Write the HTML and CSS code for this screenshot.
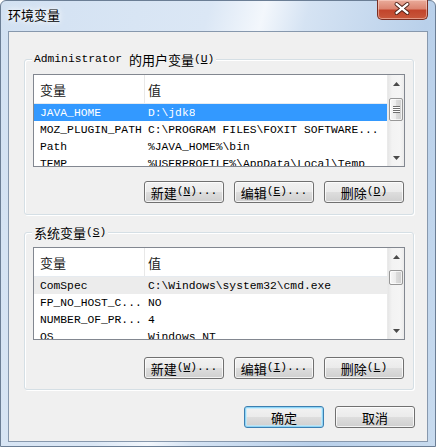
FILE: index.html
```html
<!DOCTYPE html>
<html lang="zh-CN">
<head>
<meta charset="utf-8">
<title>环境变量</title>
<link rel="stylesheet" href="styles.css">
</head>
<body>
<div class="window">
  <div class="titlebar">
    <span class="title">环境变量</span>
    <div class="close">
      <svg width="51" height="20" viewBox="0 0 51 20">
        <path d="M20 5 L31 14 M31 5 L20 14" stroke="#4a1f16" stroke-width="4.2" stroke-linecap="round"/>
        <path d="M20 5 L31 14 M31 5 L20 14" stroke="#ffffff" stroke-width="2.4" stroke-linecap="round"/>
      </svg>
    </div>
  </div>
  <div class="client">
    <div class="group">
      <div class="group-label"><span class="m">Administrator </span><span class="c">的用户变量</span><span class="m">(<u>U</u>)</span></div>
      <div class="list">
        <div class="list-body">
          <div class="lhead"><div class="col1 c">变量</div><div class="col2 c">值</div></div>
          <div class="row sel"><div class="col1">JAVA_HOME</div><div class="col2">D:\jdk8</div></div>
          <div class="row"><div class="col1">MOZ_PLUGIN_PATH</div><div class="col2">C:\PROGRAM FILES\FOXIT SOFTWARE...</div></div>
          <div class="row"><div class="col1">Path</div><div class="col2">%JAVA_HOME%\bin</div></div>
          <div class="row"><div class="col1">TEMP</div><div class="col2">%USERPROFILE%\AppData\Local\Temp</div></div>
        </div>
        <div class="vscroll">
          <div class="arrow"><svg width="7" height="4" viewBox="0 0 7 4"><path d="M0 4 L3.5 0 L7 4 Z" fill="#4a4a4a"/></svg></div>
          <div class="track"><div class="thumb thumb-a"><span class="grip"></span></div></div>
          <div class="arrow"><svg width="7" height="4" viewBox="0 0 7 4"><path d="M0 0 L3.5 4 L7 0 Z" fill="#4a4a4a"/></svg></div>
        </div>
      </div>
      <div class="btnrow">
        <button class="btn"><span class="c">新建</span><span class="m">(<u>N</u>)...</span></button>
        <button class="btn"><span class="c">编辑</span><span class="m">(<u>E</u>)...</span></button>
        <button class="btn"><span class="c">删除</span><span class="m">(<u>D</u>)</span></button>
      </div>
    </div>

    <div class="group group2">
      <div class="group-label"><span class="c">系统变量</span><span class="m">(<u>S</u>)</span></div>
      <div class="list">
        <div class="list-body">
          <div class="lhead"><div class="col1 c">变量</div><div class="col2 c">值</div></div>
          <div class="row hot"><div class="col1">ComSpec</div><div class="col2">C:\Windows\system32\cmd.exe</div></div>
          <div class="row"><div class="col1">FP_NO_HOST_C...</div><div class="col2">NO</div></div>
          <div class="row"><div class="col1">NUMBER_OF_PR...</div><div class="col2">4</div></div>
          <div class="row"><div class="col1">OS</div><div class="col2">Windows_NT</div></div>
        </div>
        <div class="vscroll">
          <div class="arrow"><svg width="7" height="4" viewBox="0 0 7 4"><path d="M0 4 L3.5 0 L7 4 Z" fill="#4a4a4a"/></svg></div>
          <div class="track"><div class="thumb thumb-b"></div></div>
          <div class="arrow"><svg width="7" height="4" viewBox="0 0 7 4"><path d="M0 0 L3.5 4 L7 0 Z" fill="#4a4a4a"/></svg></div>
        </div>
      </div>
      <div class="btnrow btnrow2">
        <button class="btn"><span class="c">新建</span><span class="m">(<u>W</u>)...</span></button>
        <button class="btn"><span class="c">编辑</span><span class="m">(<u>I</u>)...</span></button>
        <button class="btn"><span class="c">删除</span><span class="m">(<u>L</u>)</span></button>
      </div>
    </div>

    <div class="footer">
      <button class="btn btn-default"><span class="c">确定</span></button>
      <button class="btn"><span class="c">取消</span></button>
    </div>
  </div>
</div>
</body>
</html>
```

FILE: styles.css
```css
* { box-sizing: border-box; }
html, body { margin: 0; padding: 0; background: #ffffff; }
body {
  font-family: "Liberation Mono", "Noto Sans CJK SC", monospace;
  font-size: 11.3px;
  color: #000;
}
.c { font-family: "Noto Sans CJK SC", sans-serif; font-size: 13px; }
.m { font-family: "Liberation Mono", monospace; font-size: 11.3px; }
u { text-decoration: underline; text-underline-offset: 1px; }

.window {
  width: 436px;
  height: 447px;
  border: 1px solid #6b7e95;
  border-radius: 6px 6px 0 0;
  padding: 0 7px 4px 7px;
  display: flex;
  flex-direction: column;
  background: linear-gradient(105deg, #d2e1f2 0%, #dbe7f5 38%, #f3f7fc 48%, #d5e3f3 56%, #b9d0ea 78%, #c8dbef 100%);
}

.titlebar {
  height: 30px;
  flex: none;
  display: flex;
  justify-content: space-between;
  align-items: flex-start;
}
.title {
  margin-top: 5px;
  line-height: 18px;
  font-family: "Noto Sans CJK SC", sans-serif;
  font-size: 13px;
  color: #000;
  text-shadow: 0 0 5px #fff, 0 0 8px #fff;
}
.close {
  width: 51px;
  height: 20px;
  margin-top: -1px;
  border: 1px solid #7a2e22;
  border-top: none;
  border-radius: 0 0 5px 5px;
  background: linear-gradient(180deg, #e9ab9a 0%, #dc8672 45%, #c2452c 55%, #c8583c 100%);
  box-shadow: inset 0 0 0 1px rgba(255, 220, 210, 0.5);
  display: flex;
}
.close svg { display: block; margin: -1px 0 0 -1px; }

.client {
  flex: 1;
  background: #f0f0f0;
  border: 1px solid #8798ad;
  padding: 0 12px 0 0;
  display: flex;
  flex-direction: column;
}

.group {
  width: 390px;
  margin: 27px 0 0 15px;
  border: 1px solid #d5dfe5;
  border-radius: 3px;
  box-shadow: inset 1px 1px 0 #fff, 1px 1px 0 #fff;
  padding: 0 8px 11px 8px;
}
.group2 { margin-top: 17px; padding-bottom: 10px; }
.group-label {
  display: flex;
  align-items: center;
  width: fit-content;
  height: 16px;
  margin: -9px 0 0 -1px;
  padding: 0 2px;
  background: #f0f0f0;
  white-space: pre;
}

.list {
  margin-top: 7px;
  height: 93px;
  border: 1px solid #828790;
  background: #fff;
  display: flex;
  overflow: hidden;
}
.list-body { flex: 1; overflow: hidden; }
.lhead {
  height: 29px;
  display: flex;
  align-items: center;
  border-bottom: 1px solid #e6ebf0;
  color: #1a1a1a;
}
.lhead .col1 { border-right: 1px solid #e8e8e8; height: 100%; display: flex; align-items: center; }
.row {
  height: 17px;
  display: flex;
  align-items: center;
  white-space: nowrap;
}
.col1 { width: 111px; flex: none; padding-left: 6px; overflow: hidden; }
.col2 { padding-left: 3px; overflow: hidden; }
.row.sel { background: #3399ff; color: #fff; }
.row.hot { background: #ececec; }

.vscroll {
  width: 17px;
  flex: none;
  display: flex;
  flex-direction: column;
  background: linear-gradient(90deg, #e6e6e6 0%, #f3f3f3 25%, #f5f5f5 75%, #ebebeb 100%);
  border-left: 1px solid #eaeaea;
}
.arrow {
  height: 17px;
  flex: none;
  display: flex;
  align-items: center;
  justify-content: center;
}
.arrow svg { display: block; }
.track { flex: 1; padding: 0 1px; }
.thumb {
  border: 1px solid #979797;
  border-radius: 2px;
  background: linear-gradient(90deg, #f7f7f7 0%, #ececec 50%, #dcdcdc 51%, #cfcfcf 100%);
  box-shadow: inset 0 0 0 1px rgba(255,255,255,0.7);
  display: flex;
  align-items: center;
  justify-content: center;
}
.thumb-a { margin-top: 6px; height: 23px; }
.thumb-b { margin-top: 5px; height: 15px; }
.grip {
  width: 7px;
  height: 7px;
  background: repeating-linear-gradient(180deg, #6f6f6f 0 1px, #ffffff 1px 2px);
}

.btnrow {
  display: flex;
  justify-content: flex-end;
  gap: 10px;
  margin-top: 14px;
  padding-right: 1px;
}
.btnrow2 { margin-top: 17px; }
.btn {
  width: 80px;
  height: 22px;
  padding: 0;
  border: 1px solid #707070;
  border-radius: 3px;
  background: linear-gradient(180deg, #f2f2f2 0%, #ebebeb 48%, #dddddd 52%, #cfcfcf 100%);
  box-shadow: inset 0 0 0 1px rgba(255, 255, 255, 0.75);
  color: #000;
  display: flex;
  align-items: center;
  justify-content: center;
  line-height: 1;
  white-space: pre;
}
.btn-default {
  border-color: #3c7fb1;
  box-shadow: inset 0 0 0 1px #8fd5f6, inset 0 0 0 2px rgba(190, 235, 255, 0.7);
}

.footer {
  display: flex;
  justify-content: flex-end;
  gap: 11px;
  margin-top: 16px;
}
```
